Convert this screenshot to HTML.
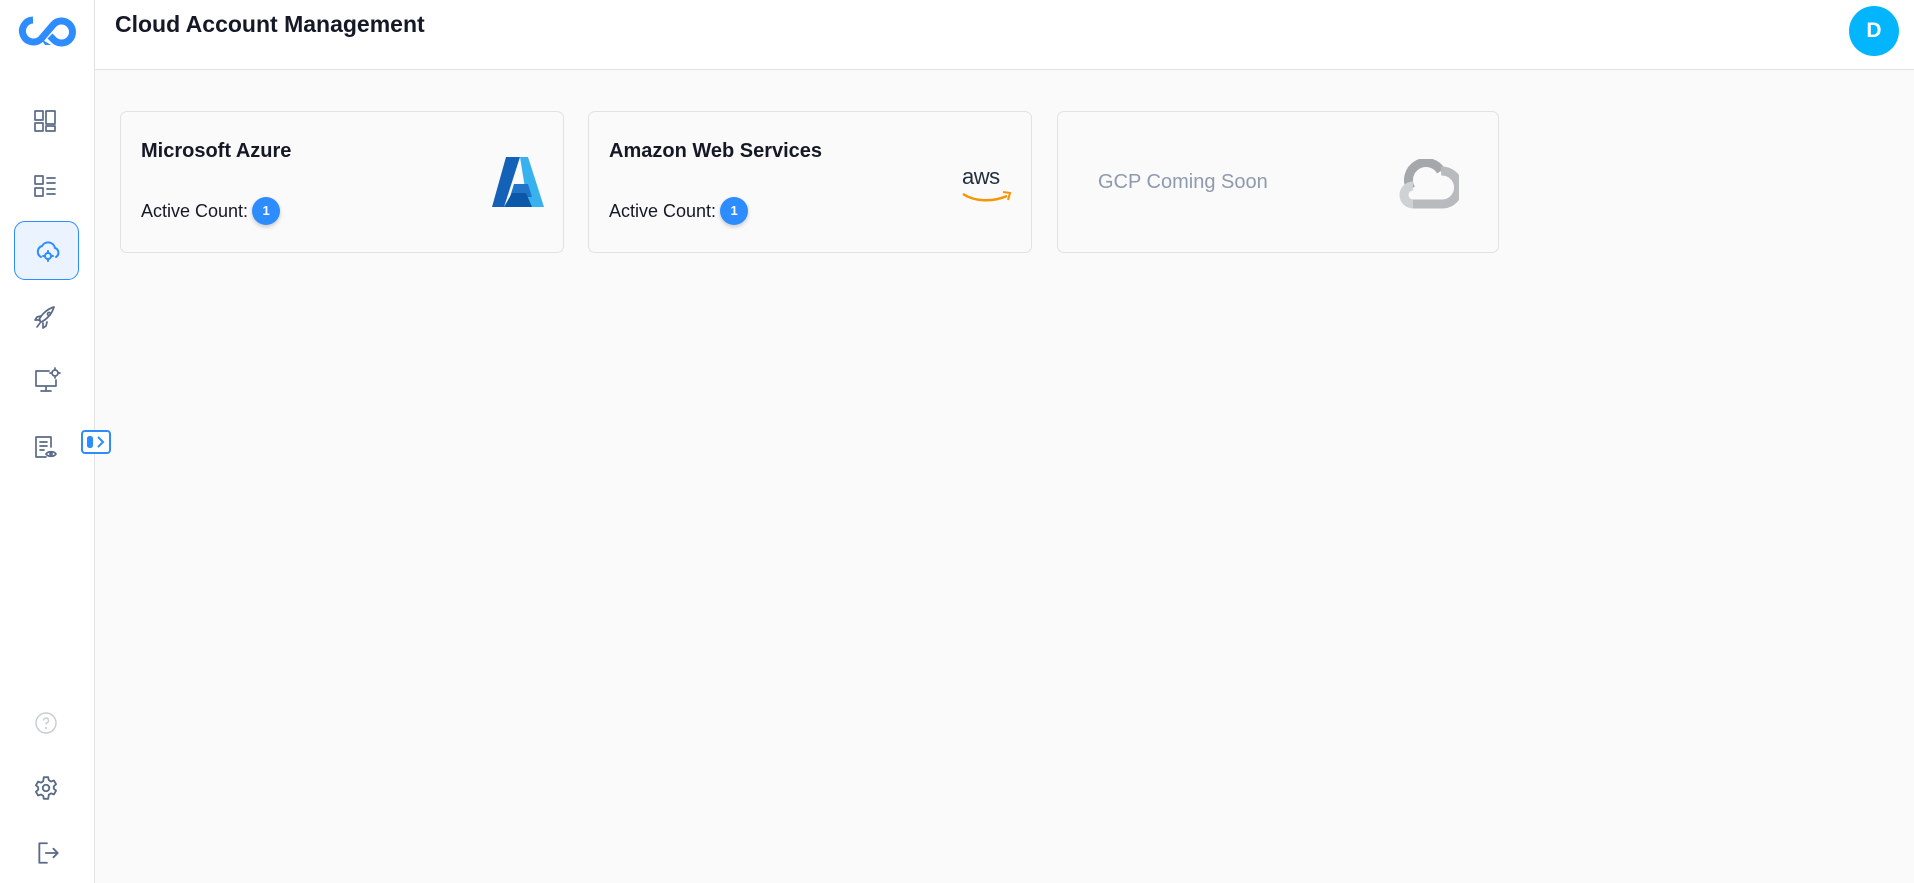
<!DOCTYPE html>
<html><head><meta charset="utf-8"><style>
*{box-sizing:border-box;margin:0;padding:0}
body{width:1914px;height:883px;overflow:hidden;background:#fafafa;font-family:"Liberation Sans",sans-serif;position:relative;color:#1a1d2b}
.side{position:absolute;left:0;top:0;width:95px;height:883px;background:#fff;border-right:1px solid #e3e3e3}
.hdr{position:absolute;left:95px;top:0;right:0;height:70px;background:#fff;border-bottom:1px solid #e3e3e3}
.title{position:absolute;left:115px;top:11px;font-size:23px;font-weight:bold;color:#151826}
.av{position:absolute;left:1849px;top:6px;width:50px;height:50px;border-radius:50%;background:#03b5fc;color:#fff;font-size:21px;font-weight:bold;text-align:center;line-height:50px}
.card{position:absolute;top:111px;height:142px;width:444px;border:1px solid #e2e2e2;border-radius:7px;background:#fafafa}
.ct{position:absolute;left:20px;top:28px;font-size:20px;font-weight:bold;color:#161826}
.ac{position:absolute;left:20px;top:85px;font-size:18px;color:#161826;display:flex;align-items:center;height:28px}
.badge{margin-left:4px;width:28px;height:28px;border-radius:50%;background:#2d8cff;color:#fff;font-size:13px;font-weight:bold;text-align:center;line-height:28px;box-shadow:0 2px 4px rgba(0,0,0,.2)}
.ic{position:absolute;left:32px}
svg.i{fill:none;stroke:#5a6b88;stroke-width:1.7;stroke-linecap:round;stroke-linejoin:round}
</style></head><body>
<div class="side">
<svg style="position:absolute;left:18px;top:15px" width="58" height="32" viewBox="0 0 58 32"><path d="M15 5a11 11 0 1 0 8 19l6-7 6-7a11 11 0 1 1 0 14l-3-3" fill="none" stroke="#2d8cff" stroke-width="7"/><path d="M23 24l4 6h6z" fill="#2d8cff"/></svg>
<svg class="i ic" style="top:108px" width="26" height="26" viewBox="0 0 26 26"><rect x="3" y="3" width="8" height="9"/><rect x="3" y="15" width="8" height="8"/><rect x="14" y="3" width="9" height="13"/><rect x="14" y="18" width="9" height="5"/></svg>
<svg class="i ic" style="top:173px" width="26" height="26" viewBox="0 0 26 26"><rect x="3" y="3" width="8" height="8"/><rect x="3" y="15" width="8" height="8"/><path d="M15 5h8M15 10h8M15 16h8M15 21h8"/></svg>
<div style="position:absolute;left:14px;top:221px;width:65px;height:59px;border:1px solid #2d8cff;border-radius:11px;background:#eaf3ff"></div>
<svg class="ic" style="top:237px;left:33px" width="28" height="28" viewBox="0 0 28 28" fill="none" stroke="#2d8cff" stroke-width="2" stroke-linecap="round"><path d="M8 20a6 6 0 0 1 1-11 7 7 0 0 1 13 2 5 5 0 0 1 1 9"/><circle cx="15" cy="19" r="3"/><path d="M15 14v1M15 23v1M10 19h1M19 19h1"/></svg>
<svg class="i ic" style="top:303px" width="28" height="28" viewBox="0 0 28 28"><path d="M9 19c5-2 11-8 13-15-7 2-13 8-15 13z"/><path d="M9 13l-4 1-2 3 5 0M15 19l-1 4-3 2 0-5M8 20l-3 4"/><circle cx="17" cy="11" r="1.5"/></svg>
<svg class="i ic" style="top:366px" width="30" height="30" viewBox="0 0 30 30"><path d="M17 5H4v15h20v-6M14 20v5M9 25h10"/><circle cx="23" cy="7" r="3"/><path d="M23 2v1M23 11v1M18 7h1M27 7h1"/></svg>
<svg class="i ic" style="top:433px" width="28" height="28" viewBox="0 0 28 28"><path d="M19 14V4H4v20h10"/><path d="M8 9h7M8 13h7M8 17h4"/><path d="M14 21c2-3 8-3 10 0-2 3-8 3-10 0z"/><circle cx="19" cy="21" r="1"/></svg>
<svg style="position:absolute;left:81px;top:430px" width="30" height="24" viewBox="0 0 30 24"><rect x="1" y="1" width="28" height="22" rx="3" fill="#fff" stroke="#2d8cff" stroke-width="2"/><rect x="6" y="6" width="6" height="12" rx="2.5" fill="#2d8cff"/><path d="M17 7l5 5-5 5" fill="none" stroke="#2d8cff" stroke-width="2"/></svg>
<svg class="ic" style="top:712px;left:35px" width="22" height="22" viewBox="0 0 22 22" fill="none" stroke="#c6ccd6" stroke-width="1.4"><circle cx="11" cy="11" r="10"/><path d="M8.5 8.5a2.5 2.5 0 1 1 3.5 2.3c-.7.3-1 .8-1 1.7"/><circle cx="11" cy="16" r=".4"/></svg>
<svg class="i ic" style="top:775px;left:33px" width="26" height="26" viewBox="0 0 24 24"><circle cx="12" cy="12" r="3"/><path d="M10 2h4l.6 2.8 2 1.2 2.7-.9 2 3.4-2.1 1.9v2.2l2.1 1.9-2 3.4-2.7-.9-2 1.2L14 22h-4l-.6-2.8-2-1.2-2.7.9-2-3.4 2.1-1.9v-2.2L2.7 9.5l2-3.4 2.7.9 2-1.2z"/></svg>
<svg class="i ic" style="top:840px;left:35px" width="26" height="26" viewBox="0 0 24 24"><path d="M11 3H4v18h7"/><path d="M10 12h11M17 8l4 4-4 4"/></svg>
</div>
<div class="hdr"></div>
<div class="title">Cloud Account Management</div>
<div class="av">D</div>

<div class="card" style="left:120px">
<div class="ct">Microsoft Azure</div>
<div class="ac">Active Count:<div class="badge">1</div></div>
<svg style="position:absolute;left:371px;top:45px" width="52" height="50" viewBox="0 0 52 50"><path d="M14 0h14L12 50H0z" fill="#1462b8"/><path d="M28 0h8l16 50H36z" fill="#37b2ee"/><path d="M22 27l14 0 4 13H18z" fill="#2174c7"/><path d="M12 50l8-14h14l6 14z" fill="#0b58a8"/></svg>
</div>
<div class="card" style="left:588px">
<div class="ct">Amazon Web Services</div>
<div class="ac">Active Count:<div class="badge">1</div></div>
<div style="position:absolute;left:373px;top:52px;font-size:22px;color:#232f3e;letter-spacing:-0.5px">aws</div>
<svg style="position:absolute;left:372px;top:79px" width="52" height="14" viewBox="0 0 52 14"><path d="M2 3c12 8 30 8 44 2" fill="none" stroke="#f79400" stroke-width="2.5"/><path d="M42 1l7 1-2 7" fill="none" stroke="#f79400" stroke-width="2"/></svg>
</div>
<div class="card" style="left:1057px;width:442px">
<div style="position:absolute;left:40px;top:59px;font-size:20px;color:#8e9aae">GCP Coming Soon</div>
<svg style="position:absolute;left:339px;top:47px" width="62" height="50" viewBox="0 0 62 50"><path d="M14 30a16 16 0 0 1 30-18" fill="none" stroke="#a5a7aa" stroke-width="9"/><path d="M44 12a12 12 0 0 1 2 33H16" fill="none" stroke="#b8babd" stroke-width="9"/><path d="M16 45a9 9 0 0 1 0-18" fill="none" stroke="#cfd1d3" stroke-width="9"/></svg>
</div>
</body></html>
